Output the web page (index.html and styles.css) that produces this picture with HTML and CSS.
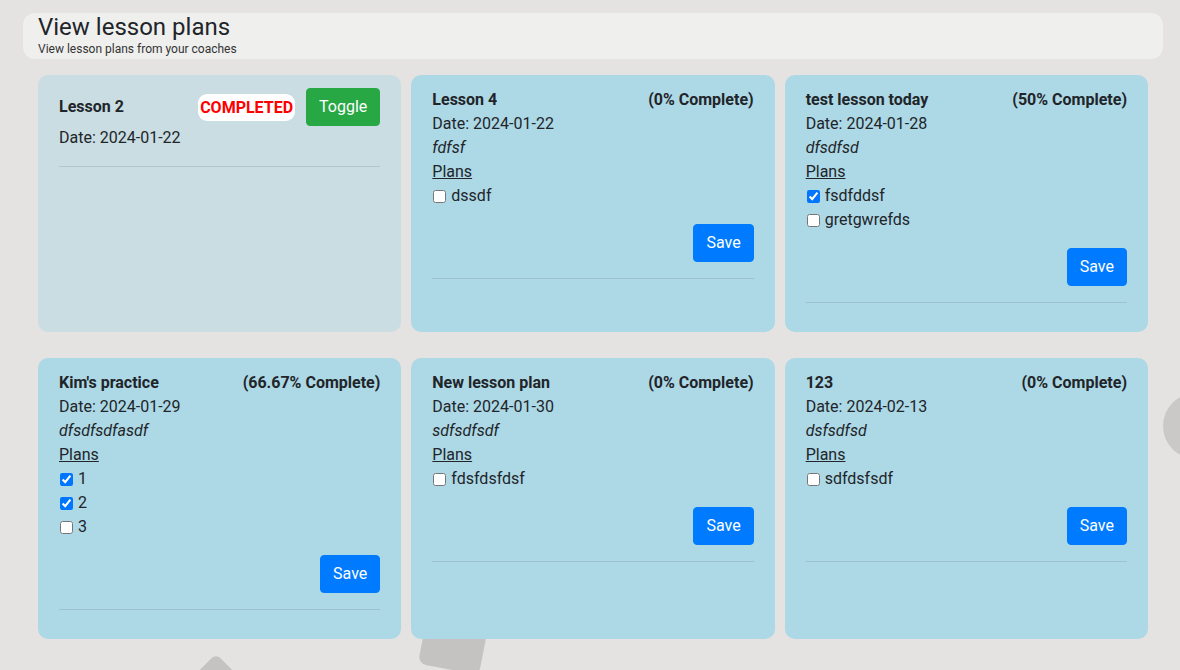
FILE: index.html
```html
<!DOCTYPE html>
<html lang="en">
<head>
<meta charset="utf-8">
<title>View lesson plans</title>
<link rel="stylesheet" href="styles.css">
</head>
<body>
<div class="deco-layer">
  <div class="deco deco-circle"></div>
  <div class="deco deco-slab"></div>
  <div class="deco deco-diamond"></div>
</div>

<main class="page">
  <header class="page-header">
    <h1 class="page-title">View lesson plans</h1>
    <p class="page-subtitle">View lesson plans from your coaches</p>
  </header>

  <section class="card-grid">
    <article class="card card-done">
      <div class="card-head">
        <span class="card-title">Lesson 2</span>
        <div class="head-actions">
          <span class="badge-completed">COMPLETED</span>
          <button class="btn btn-green">Toggle</button>
        </div>
      </div>
      <div class="line">Date: 2024-01-22</div>
      <hr class="divider">
    </article>

    <article class="card">
      <div class="card-head">
        <span class="card-title">Lesson 4</span>
        <span class="card-progress">(0% Complete)</span>
      </div>
      <div class="line">Date: 2024-01-22</div>
      <div class="line desc">fdfsf</div>
      <div class="line plans">Plans</div>
      <label class="line check"><input type="checkbox"> dssdf</label>
      <div class="actions"><button class="btn btn-blue">Save</button></div>
      <hr class="divider">
    </article>

    <article class="card">
      <div class="card-head">
        <span class="card-title">test lesson today</span>
        <span class="card-progress">(50% Complete)</span>
      </div>
      <div class="line">Date: 2024-01-28</div>
      <div class="line desc">dfsdfsd</div>
      <div class="line plans">Plans</div>
      <label class="line check"><input type="checkbox" checked> fsdfddsf</label>
      <label class="line check"><input type="checkbox"> gretgwrefds</label>
      <div class="actions"><button class="btn btn-blue">Save</button></div>
      <hr class="divider">
    </article>

    <article class="card">
      <div class="card-head">
        <span class="card-title">Kim's practice</span>
        <span class="card-progress">(66.67% Complete)</span>
      </div>
      <div class="line">Date: 2024-01-29</div>
      <div class="line desc">dfsdfsdfasdf</div>
      <div class="line plans">Plans</div>
      <label class="line check"><input type="checkbox" checked> 1</label>
      <label class="line check"><input type="checkbox" checked> 2</label>
      <label class="line check"><input type="checkbox"> 3</label>
      <div class="actions"><button class="btn btn-blue">Save</button></div>
      <hr class="divider">
    </article>

    <article class="card">
      <div class="card-head">
        <span class="card-title">New lesson plan</span>
        <span class="card-progress">(0% Complete)</span>
      </div>
      <div class="line">Date: 2024-01-30</div>
      <div class="line desc">sdfsdfsdf</div>
      <div class="line plans">Plans</div>
      <label class="line check"><input type="checkbox"> fdsfdsfdsf</label>
      <div class="actions"><button class="btn btn-blue">Save</button></div>
      <hr class="divider">
    </article>

    <article class="card">
      <div class="card-head">
        <span class="card-title">123</span>
        <span class="card-progress">(0% Complete)</span>
      </div>
      <div class="line">Date: 2024-02-13</div>
      <div class="line desc">dsfsdfsd</div>
      <div class="line plans">Plans</div>
      <label class="line check"><input type="checkbox"> sdfdsfsdf</label>
      <div class="actions"><button class="btn btn-blue">Save</button></div>
      <hr class="divider">
    </article>
  </section>
</main>
</body>
</html>
```

FILE: styles.css
```css
* { box-sizing: border-box; }

html, body {
  height: 670px;
  overflow: hidden;
}

body {
  margin: 0;
  background: #e4e3e1;
  font-family: Roboto, "Liberation Sans", Arial, sans-serif;
  font-size: 16px;
  line-height: 24px;
  color: #212529;
  position: relative;
}

/* background decoration */
.deco-layer {
  position: absolute;
  left: 0;
  top: 0;
  width: 1180px;
  height: 670px;
  overflow: hidden;
  z-index: 0;
}
.deco {
  position: absolute;
  background: #c4c3c1;
}
.deco-circle {
  left: 1163px;
  top: 393px;
  width: 66px;
  height: 66px;
  border-radius: 50%;
  background: #cac9c7;
}
.deco-slab {
  left: 425px;
  top: 590px;
  width: 62px;
  height: 80px;
  border-radius: 8px;
  transform: rotate(11deg);
}
.deco-diamond {
  left: 196px;
  top: 662px;
  width: 40px;
  height: 40px;
  border-radius: 6px;
  transform: rotate(45deg);
}

.page {
  position: relative;
  z-index: 1;
  width: 1140px;
  margin-left: 23px;
  padding-top: 13px;
}

.page-header {
  background: #efefee;
  border-radius: 12px;
  height: 46px;
  padding: 0 15px;
}

.page-title {
  margin: 0 0 1px;
  font-size: 24px;
  font-weight: 400;
  line-height: 28px;
  color: #212529;
}

.page-subtitle {
  margin: 0;
  font-size: 12px;
  line-height: 15px;
  color: #333;
}

.card-grid {
  margin: 16px 15px 0;
  display: grid;
  grid-template-columns: repeat(3, 1fr);
  column-gap: 10px;
  row-gap: 26px;
}

.card {
  background: #add8e6;
  border-radius: 10px;
  padding: 13px 21px 13px;
}

.card-done {
  background: rgba(173, 216, 230, 0.5);
}

.card-head {
  display: flex;
  justify-content: space-between;
  align-items: center;
  min-height: 24px;
}

.card-title,
.card-progress {
  font-weight: 700;
  font-size: 16px;
}

.head-actions {
  display: flex;
  align-items: center;
  gap: 11px;
}

.badge-completed {
  background: #fff;
  color: #ff0000;
  font-weight: 700;
  font-size: 16px;
  line-height: 23px;
  padding: 2px 2px;
  border-radius: 9px;
}

.line {
  display: block;
  min-height: 24px;
}

.desc { font-style: italic; }

.plans { text-decoration: underline; }

.check {
  display: flex;
  align-items: center;
}

.check input {
  width: 13px;
  height: 13px;
  margin: 0 5px 0 1px;
}

.actions {
  display: flex;
  justify-content: flex-end;
  margin-top: 16px;
}

.btn {
  font-family: inherit;
  font-size: 16px;
  line-height: 24px;
  padding: 6px 12px;
  border: 1px solid transparent;
  border-radius: 4px;
  color: #fff;
  cursor: pointer;
}

.btn-blue { background: #007bff; border-color: #007bff; }
.btn-green { background: #28a745; border-color: #28a745; }

.divider {
  margin: 16px 0;
  border: 0;
  border-top: 1px solid rgba(0, 0, 0, 0.1);
}
```
